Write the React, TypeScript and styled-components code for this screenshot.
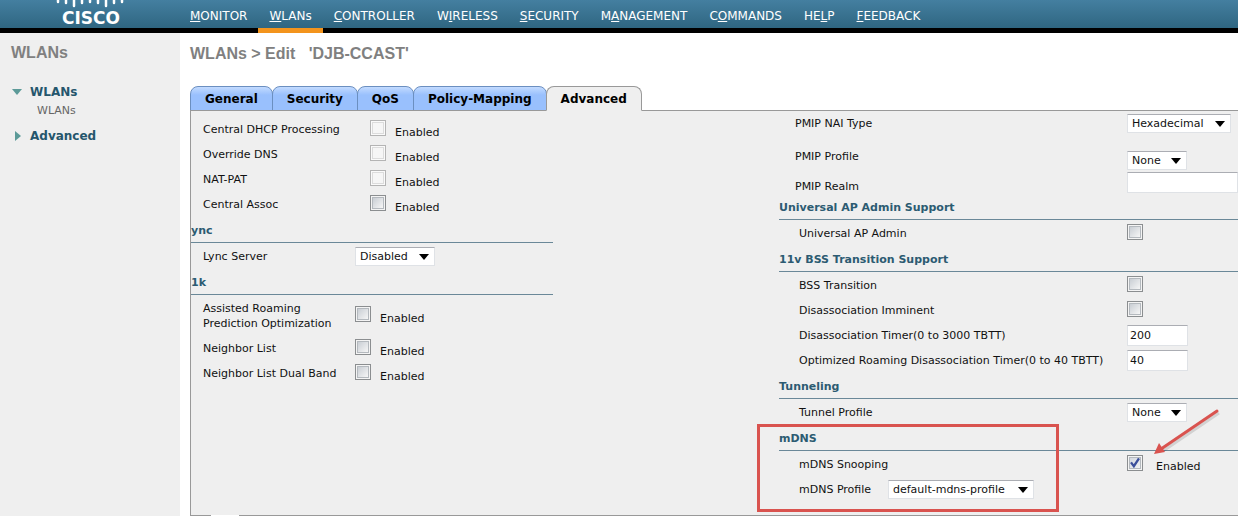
import React from "react";
import styled, { createGlobalStyle, css } from "styled-components";

const Global = createGlobalStyle`
  *, *::before, *::after { box-sizing: border-box; }
  body {
    margin: 0;
    background: #fff;
    font: 11px/15px "DejaVu Sans", Verdana, sans-serif;
    color: #111;
  }
`;

const Page = styled.div`
  min-height: 100vh;
  display: flex;
  flex-direction: column;
  overflow-x: hidden;
`;

const Header = styled.header`
  display: flex;
  height: 33px;
  border-bottom: 5px solid #000;
  background: linear-gradient(#447fa0, #2f6681);
`;

const Brand = styled.div`
  width: 179px;
  flex: none;
  padding-left: 56px;
  color: #fff;
`;

const BrandBars = styled.svg`
  display: block;
`;

const BrandName = styled.div`
  width: 70px;
  text-align: center;
  font: bold 17px/20px "DejaVu Sans", sans-serif;
`;

const Nav = styled.nav`
  display: flex;
`;

const NavLink = styled.a<{ $active?: boolean }>`
  height: 33px;
  padding: 8px 11px 0;
  color: #fff;
  font-size: 12px;
  line-height: 16px;
  text-decoration: none;
  white-space: nowrap;
  border-bottom: 5px solid ${(p) => (p.$active ? "#f3941d" : "transparent")};
`;

const Body = styled.div`
  flex: 1;
  display: flex;
`;

const Sidebar = styled.aside`
  width: 180px;
  flex: none;
  padding: 10px 11px;
  background: #efefef;
`;

const Heading = styled.h1`
  margin: 0;
  color: #808080;
  font: bold 16px/20px "Liberation Sans", Arial, sans-serif;
  white-space: pre;
`;

const Tree = styled.ul`
  margin: 20px 0 0;
  padding: 0;
  list-style: none;
`;

const TreeLink = styled.a`
  display: flex;
  align-items: center;
  gap: 7px;
  height: 18px;
  color: #25566c;
  font-size: 12px;
  font-weight: bold;
  text-decoration: none;
`;

const TreeItem = styled.li`
  margin-bottom: 8px;
`;

const SubLink = styled.a`
  display: block;
  height: 18px;
  padding: 2px 0 0 26px;
  color: #666;
  text-decoration: none;
`;

const Main = styled.main`
  flex: 1;
  min-width: 0;
  padding: 11px 0 0 10px;
  display: flex;
  flex-direction: column;
`;

const Tabs = styled.div`
  display: flex;
  margin-top: 22px;
`;

const Tab = styled.button<{ $active?: boolean }>`
  height: 25px;
  margin-bottom: -1px;
  padding: 0 14px;
  border: 1px solid #6b8fc0;
  border-radius: 8px 8px 0 0;
  background: linear-gradient(#c3dbff, #99c0fd 8px);
  color: #000;
  font: bold 12px/16px "DejaVu Sans", Verdana, sans-serif;
  white-space: nowrap;
  & + & { margin-left: -1px; }
  ${(p) =>
    p.$active &&
    css`
      position: relative;
      z-index: 1;
      border-color: #999;
      border-bottom-color: #efefef;
      background: #efefef;
    `}
`;

const Panel = styled.form`
  position: relative;
  flex: 1;
  display: grid;
  grid-template-columns: minmax(362px, 588fr) minmax(459px, 459fr);
  align-content: start;
  padding-bottom: 12px;
  border: 1px solid #999;
  border-right: 0;
  background: #efefef;
  &::after {
    content: "";
    position: absolute;
    left: 20px;
    bottom: -1px;
    width: 28px;
    height: 1px;
    background: #fff;
  }
`;

const LeftColumn = styled.div`
  width: 362px;
  padding-top: 6px;
`;

const RightColumn = styled.div`
  min-width: 0;
`;

const Section = styled.section`
  position: relative;
`;

const SectionTitle = styled.h2`
  height: 26px;
  margin: 0;
  padding-top: 6px;
  border-bottom: 1px solid #6a8898;
  color: #2c5b72;
  font-size: 11px;
  line-height: 15px;
`;

const Row = styled.div<{ $label: number; $indent?: number; $height?: number; $end?: boolean }>`
  display: grid;
  grid-template-columns: ${(p) => p.$label}px minmax(0, 1fr);
  align-items: ${(p) => (p.$end ? "end" : "center")};
  height: ${(p) => p.$height ?? 25}px;
  padding-left: ${(p) => p.$indent ?? 20}px;
`;

const Label = styled.label<{ $lift?: number; $drop?: number }>`
  white-space: pre-line;
  padding-top: ${(p) => p.$drop ?? 0}px;
  padding-bottom: ${(p) => p.$lift ?? 0}px;
`;

const Control = styled.div`
  display: flex;
  align-items: center;
`;

const Check = styled.input.attrs({ type: "checkbox" })`
  appearance: none;
  width: 16px;
  height: 16px;
  margin: 0 0 3px;
  border: 1px solid #8b8e90;
  background: linear-gradient(135deg, #c9ced4, #f6f6f6) content-box;
  padding: 2px;
  box-shadow: inset 0 0 0 1px #f4f4f4, inset 0 0 0 2px #b4b9be;
  &:disabled {
    border-color: #b4b4b4;
    background: #f6f6f6;
    box-shadow: inset 0 0 0 1px #fafafa, inset 0 0 0 2px #dcdcdc;
  }
  &:checked {
    background: url("data:image/svg+xml,%3Csvg xmlns='http://www.w3.org/2000/svg' viewBox='0 0 14 14'%3E%3Cpath d='M3.5 6.5L6 9.8L10.5 3' fill='none' stroke='%233b4f9b' stroke-width='2'/%3E%3C/svg%3E") border-box,
      linear-gradient(135deg, #cdd3dd, #f6f6f6);
  }
`;

const CheckText = styled.label<{ $gap?: number }>`
  margin: 5px 0 0 ${(p) => p.$gap ?? 9}px;
`;

const SelectBox = styled.span`
  position: relative;
  display: inline-flex;
`;

const Select = styled.select<{ $width: number }>`
  appearance: none;
  width: ${(p) => p.$width}px;
  height: 19px;
  padding: 0 0 0 4px;
  border: 1px solid #dfe2e6;
  border-top-color: #abadb3;
  border-radius: 0;
  background: #fff;
  color: #111;
  font: 11px/15px "DejaVu Sans", Verdana, sans-serif;
`;

const SelectArrow = styled.svg`
  position: absolute;
  right: 6px;
  top: 7px;
  pointer-events: none;
`;

const TextInput = styled.input<{ $width?: number }>`
  width: ${(p) => (p.$width ? `${p.$width}px` : "100%")};
  height: 21px;
  padding: 0 2px;
  border: 1px solid #dfe2e6;
  border-top-color: #abadb3;
  background: #fff;
  color: #111;
  font: 11px/15px "DejaVu Sans", Verdana, sans-serif;
`;

const Highlight = styled.div`
  position: absolute;
  left: -22px;
  top: -1px;
  width: 302px;
  height: 88px;
  border: 3px solid #d9534f;
  pointer-events: none;
`;

const Pointer = styled.svg`
  position: absolute;
  left: 370px;
  top: -20px;
  pointer-events: none;
`;

const NAV: { text: string; key: number; active?: boolean }[] = [
  { text: "MONITOR", key: 0 },
  { text: "WLANs", key: 0, active: true },
  { text: "CONTROLLER", key: 0 },
  { text: "WIRELESS", key: 1 },
  { text: "SECURITY", key: 0 },
  { text: "MANAGEMENT", key: 1 },
  { text: "COMMANDS", key: 1 },
  { text: "HELP", key: 2 },
  { text: "FEEDBACK", key: 0 },
];

const TABS = ["General", "Security", "QoS", "Policy-Mapping", "Advanced"];

function Dropdown({ id, value, width }: { id: string; value: string; width: number }) {
  return (
    <SelectBox>
      <Select id={id} $width={width} defaultValue={value}>
        <option>{value}</option>
      </Select>
      <SelectArrow width="10" height="6" viewBox="0 0 10 6" aria-hidden="true">
        <path d="M0 0H10L5 6Z" fill="#000" />
      </SelectArrow>
    </SelectBox>
  );
}

type CheckRowProps = {
  id: string;
  label: string;
  column: number;
  indent?: number;
  height?: number;
  disabled?: boolean;
  checked?: boolean;
  text?: boolean;
  gap?: number;
};

function CheckRow({ id, label, column, indent, height, disabled, checked, text, gap }: CheckRowProps) {
  return (
    <Row $label={column} $indent={indent} $height={height}>
      <Label htmlFor={id}>{label}</Label>
      <Control>
        <Check id={id} disabled={disabled} defaultChecked={checked} />
        {text && (
          <CheckText htmlFor={id} $gap={gap}>
            Enabled
          </CheckText>
        )}
      </Control>
    </Row>
  );
}

export default function App() {
  return (
    <Page>
      <Global />
      <Header>
        <Brand>
          <BrandBars width="70" height="8" viewBox="0 0 70 8" aria-hidden="true">
            <path
              d="M2 0V2M10 0V3M18 0V6M26 0V3M34 0V2M42 0V3M50 0V6M58 0V3M66 0V2"
              stroke="#fff"
              strokeWidth="2.5"
              strokeLinecap="round"
            />
          </BrandBars>
          <BrandName>CISCO</BrandName>
        </Brand>
        <Nav>
          {NAV.map(({ text, key, active }) => (
            <NavLink key={text} href="#" $active={active}>
              {text.slice(0, key)}
              <u>{text[key]}</u>
              {text.slice(key + 1)}
            </NavLink>
          ))}
        </Nav>
      </Header>
      <Body>
        <Sidebar>
          <Heading as="h2">WLANs</Heading>
          <Tree>
            <TreeItem>
              <TreeLink href="#">
                <svg width="12" height="12" viewBox="0 0 12 12" aria-hidden="true">
                  <path d="M1 3H11L6 9Z" fill="#5c9a98" />
                </svg>
                WLANs
              </TreeLink>
              <SubLink href="#">WLANs</SubLink>
            </TreeItem>
            <TreeItem>
              <TreeLink href="#">
                <svg width="12" height="12" viewBox="0 0 12 12" aria-hidden="true">
                  <path d="M4 1V11L10 6Z" fill="#5c9a98" />
                </svg>
                Advanced
              </TreeLink>
            </TreeItem>
          </Tree>
        </Sidebar>
        <Main>
          <Heading>{"WLANs > Edit   'DJB-CCAST'"}</Heading>
          <Tabs role="tablist">
            {TABS.map((tab) => (
              <Tab key={tab} type="button" role="tab" $active={tab === "Advanced"} aria-selected={tab === "Advanced"}>
                {tab}
              </Tab>
            ))}
          </Tabs>
          <Panel>
            <LeftColumn>
              <CheckRow id="dhcp" label="Central DHCP Processing" column={167} indent={12} disabled text />
              <CheckRow id="dns" label="Override DNS" column={167} indent={12} disabled text />
              <CheckRow id="nat" label="NAT-PAT" column={167} indent={12} disabled text />
              <CheckRow id="assoc" label="Central Assoc" column={167} indent={12} text />
              <Section>
                <SectionTitle>ync</SectionTitle>
                <Row $label={152} $indent={12} $height={26}>
                  <Label htmlFor="lync">Lync Server</Label>
                  <Control>
                    <Dropdown id="lync" value="Disabled" width={80} />
                  </Control>
                </Row>
              </Section>
              <Section>
                <SectionTitle>1k</SectionTitle>
                <CheckRow
                  id="roaming"
                  label={"Assisted Roaming\nPrediction Optimization"}
                  column={152}
                  indent={12}
                  height={41}
                  text
                />
                <CheckRow id="neighbor" label="Neighbor List" column={152} indent={12} text />
                <CheckRow id="dual" label="Neighbor List Dual Band" column={152} indent={12} text />
              </Section>
            </LeftColumn>
            <RightColumn>
              <Row $label={332} $indent={16}>
                <Label htmlFor="nai">PMIP NAI Type</Label>
                <Control>
                  <Dropdown id="nai" value="Hexadecimal" width={104} />
                </Control>
              </Row>
              <Row $label={332} $indent={16} $height={34} $end>
                <Label htmlFor="pmip" $lift={6}>
                  PMIP Profile
                </Label>
                <Control>
                  <Dropdown id="pmip" value="None" width={60} />
                </Control>
              </Row>
              <Row $label={332} $indent={16} $height={24}>
                <Label htmlFor="realm" $drop={8}>
                  PMIP Realm
                </Label>
                <Control>
                  <TextInput id="realm" type="text" />
                </Control>
              </Row>
              <Section>
                <SectionTitle>Universal AP Admin Support</SectionTitle>
                <CheckRow id="uap" label="Universal AP Admin" column={328} height={26} />
              </Section>
              <Section>
                <SectionTitle>11v BSS Transition Support</SectionTitle>
                <CheckRow id="bss" label="BSS Transition" column={328} height={26} />
                <CheckRow id="imminent" label="Disassociation Imminent" column={328} />
                <Row $label={328}>
                  <Label htmlFor="timer">Disassociation Timer(0 to 3000 TBTT)</Label>
                  <Control>
                    <TextInput id="timer" type="text" defaultValue="200" $width={61} />
                  </Control>
                </Row>
                <Row $label={328}>
                  <Label htmlFor="optimer">Optimized Roaming Disassociation Timer(0 to 40 TBTT)</Label>
                  <Control>
                    <TextInput id="optimer" type="text" defaultValue="40" $width={61} />
                  </Control>
                </Row>
              </Section>
              <Section>
                <SectionTitle>Tunneling</SectionTitle>
                <Row $label={328} $height={26}>
                  <Label htmlFor="tunnel">Tunnel Profile</Label>
                  <Control>
                    <Dropdown id="tunnel" value="None" width={60} />
                  </Control>
                </Row>
              </Section>
              <Section>
                <SectionTitle>mDNS</SectionTitle>
                <CheckRow id="snoop" label="mDNS Snooping" column={328} height={26} checked text gap={13} />
                <Row $label={89}>
                  <Label htmlFor="mdns">mDNS Profile</Label>
                  <Control>
                    <Dropdown id="mdns" value="default-mdns-profile" width={146} />
                  </Control>
                </Row>
                <Highlight />
                <Pointer width="76" height="54" viewBox="0 0 76 54" aria-hidden="true">
                  <path d="M70 8L14 46" stroke="#000" strokeOpacity="0.12" strokeWidth="3" />
                  <path d="M68 6L12 44" stroke="#d9534f" strokeWidth="3" strokeLinecap="round" />
                  <path d="M5 49L10 38L16 47Z" fill="#d9534f" />
                </Pointer>
              </Section>
            </RightColumn>
          </Panel>
        </Main>
      </Body>
    </Page>
  );
}
